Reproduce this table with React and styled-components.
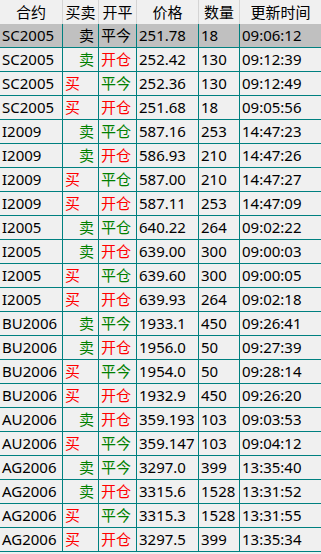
import React from 'react';
import styled, { createGlobalStyle } from 'styled-components';

const GlobalStyle = createGlobalStyle`
  body {
    margin: 0;
    background: #f0f0f0;
    font-family: "Noto Sans", "Noto Sans CJK SC", sans-serif;
  }
`;

const COLS = '63px 36px 38px 62px 41px 1fr';

const Grid = styled.div`
  width: 321px;
  background: #f0f0f0;
  font-size: 15px;
  color: #000;
`;

const HeaderRow = styled.div`
  display: grid;
  grid-template-columns: ${COLS};
  height: 24px;
`;

const HeadCell = styled.div`
  display: flex;
  align-items: center;
  justify-content: center;
  border-right: 1px solid #d4d4d4;
  line-height: 1;
  &:last-child {
    border-right: none;
  }
`;

const Row = styled.div`
  display: grid;
  grid-template-columns: ${COLS};
  height: 24px;
  box-sizing: border-box;
  border-bottom: 1px solid #008080;
  background: ${p => (p.$selected ? '#c0c0c0' : '#f0f0f0')};
`;

const Cell = styled.div`
  display: flex;
  align-items: center;
  justify-content: ${p => (p.$right ? 'flex-end' : 'flex-start')};
  padding: 0 ${p => (p.$right ? '4px' : '2px')} 0 ${p => (p.$right ? '0' : '2px')};
  border-right: 1px solid #008080;
  color: ${p => p.$color || '#000'};
  white-space: nowrap;
  overflow: hidden;
  line-height: 1;
  &:last-child {
    border-right: none;
  }
`;

const trades = [
  ['SC2005', '卖', '平今', '251.78', '18', '09:06:12'],
  ['SC2005', '卖', '开仓', '252.42', '130', '09:12:39'],
  ['SC2005', '买', '平今', '252.36', '130', '09:12:49'],
  ['SC2005', '买', '开仓', '251.68', '18', '09:05:56'],
  ['I2009', '卖', '平仓', '587.16', '253', '14:47:23'],
  ['I2009', '卖', '开仓', '586.93', '210', '14:47:26'],
  ['I2009', '买', '平仓', '587.00', '210', '14:47:27'],
  ['I2009', '买', '开仓', '587.11', '253', '14:47:09'],
  ['I2005', '卖', '平仓', '640.22', '264', '09:02:22'],
  ['I2005', '卖', '开仓', '639.00', '300', '09:00:03'],
  ['I2005', '买', '平仓', '639.60', '300', '09:00:05'],
  ['I2005', '买', '开仓', '639.93', '264', '09:02:18'],
  ['BU2006', '卖', '平今', '1933.1', '450', '09:26:41'],
  ['BU2006', '卖', '开仓', '1956.0', '50', '09:27:39'],
  ['BU2006', '买', '平今', '1954.0', '50', '09:28:14'],
  ['BU2006', '买', '开仓', '1932.9', '450', '09:26:20'],
  ['AU2006', '卖', '开仓', '359.193', '103', '09:03:53'],
  ['AU2006', '买', '平今', '359.147', '103', '09:04:12'],
  ['AG2006', '卖', '平今', '3297.0', '399', '13:35:40'],
  ['AG2006', '卖', '开仓', '3315.6', '1528', '13:31:52'],
  ['AG2006', '买', '平今', '3315.3', '1528', '13:31:55'],
  ['AG2006', '买', '开仓', '3297.5', '399', '13:35:34'],
];

const headers = ['合约', '买卖', '开平', '价格', '数量', '更新时间'];

const RED = '#ff0000';
const GREEN = '#008000';

const App = () => {
  return (
    <>
      <GlobalStyle />
      <Grid>
        <HeaderRow>
          {headers.map(h => (
            <HeadCell key={h}>{h}</HeadCell>
          ))}
        </HeaderRow>
        {trades.map((t, i) => {
          const selected = i === 0;
          const [code, side, offset, price, qty, time] = t;
          const sideColor = selected ? '#000' : side === '买' ? RED : GREEN;
          const offsetColor = selected ? '#000' : offset === '开仓' ? RED : GREEN;
          return (
            <Row key={i} $selected={selected}>
              <Cell>{code}</Cell>
              <Cell $right={side === '卖'} $color={sideColor}>{side}</Cell>
              <Cell $color={offsetColor}>{offset}</Cell>
              <Cell>{price}</Cell>
              <Cell>{qty}</Cell>
              <Cell>{time}</Cell>
            </Row>
          );
        })}
      </Grid>
    </>
  );
};

export default App;
